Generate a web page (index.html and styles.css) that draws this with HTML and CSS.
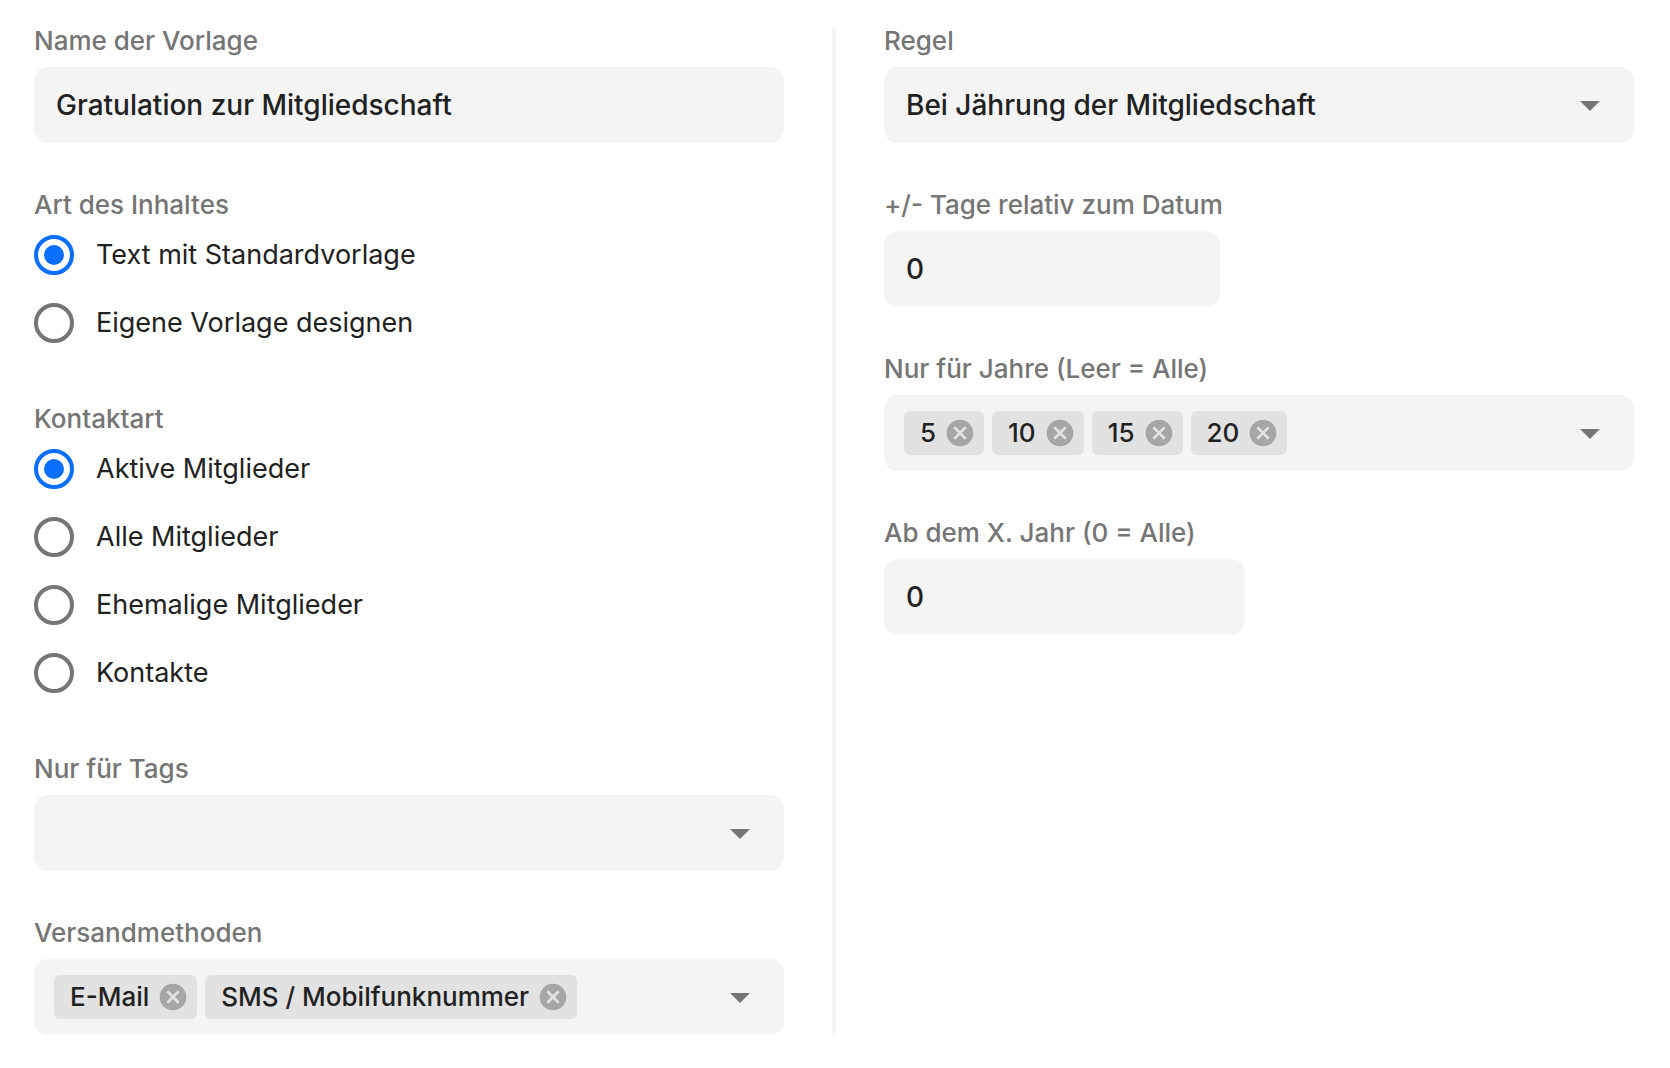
FILE: index.html
```html
<!DOCTYPE html>
<html lang="de">
<head>
  <meta charset="utf-8">
  <meta name="viewport" content="width=device-width, initial-scale=1">
  <title>Vorlage bearbeiten</title>
  <link rel="stylesheet" href="styles.css">
</head>
<body>
  <svg class="icon-defs" aria-hidden="true">
    <symbol id="icon-caret" viewBox="0 0 24 24"><path d="M2 8h20L12 18z"/></symbol>
    <symbol id="icon-cancel" viewBox="0 0 24 24"><path d="M12 2C6.47 2 2 6.47 2 12s4.47 10 10 10 10-4.47 10-10S17.53 2 12 2zm5 13.59L15.59 17 12 13.41 8.41 17 7 15.59 10.59 12 7 8.41 8.41 7 12 10.59 15.59 7 17 8.41 13.41 12 17 15.59z"/></symbol>
  </svg>

  <form class="template-form">
    <div class="column">
      <div class="group">
        <label class="label" for="name">Name der Vorlage</label>
        <input class="field text-input" id="name" type="text" value="Gratulation zur Mitgliedschaft">
      </div>

      <fieldset class="group">
        <legend class="label">Art des Inhaltes</legend>
        <div class="radios">
          <label class="radio"><input type="radio" name="content" checked>Text mit Standardvorlage</label>
          <label class="radio"><input type="radio" name="content">Eigene Vorlage designen</label>
        </div>
      </fieldset>

      <fieldset class="group">
        <legend class="label">Kontaktart</legend>
        <div class="radios">
          <label class="radio"><input type="radio" name="contact" checked>Aktive Mitglieder</label>
          <label class="radio"><input type="radio" name="contact">Alle Mitglieder</label>
          <label class="radio"><input type="radio" name="contact">Ehemalige Mitglieder</label>
          <label class="radio"><input type="radio" name="contact">Kontakte</label>
        </div>
      </fieldset>

      <div class="group">
        <label class="label" for="tags">Nur für Tags</label>
        <div class="field">
          <div class="dropdown">
            <select id="tags"><option></option></select>
            <svg class="caret" aria-hidden="true"><use href="#icon-caret"/></svg>
          </div>
        </div>
      </div>

      <div class="group">
        <label class="label" for="methods">Versandmethoden</label>
        <div class="field">
          <ul class="chips">
            <li class="chip">E-Mail<button type="button" aria-label="E-Mail entfernen"><svg><use href="#icon-cancel"/></svg></button></li>
            <li class="chip">SMS / Mobilfunknummer<button type="button" aria-label="SMS / Mobilfunknummer entfernen"><svg><use href="#icon-cancel"/></svg></button></li>
          </ul>
          <div class="dropdown">
            <select id="methods"><option></option></select>
            <svg class="caret" aria-hidden="true"><use href="#icon-caret"/></svg>
          </div>
        </div>
      </div>
    </div>

    <div class="divider"></div>

    <div class="column">
      <div class="group">
        <label class="label" for="rule">Regel</label>
        <div class="field">
          <div class="dropdown">
            <select id="rule"><option>Bei Jährung der Mitgliedschaft</option></select>
            <svg class="caret" aria-hidden="true"><use href="#icon-caret"/></svg>
          </div>
        </div>
      </div>

      <div class="group">
        <label class="label" for="days">+/- Tage relativ zum Datum</label>
        <input class="field text-input days" id="days" type="number" value="0">
      </div>

      <div class="group">
        <label class="label" for="years">Nur für Jahre (Leer = Alle)</label>
        <div class="field">
          <ul class="chips">
            <li class="chip">5<button type="button" aria-label="5 entfernen"><svg><use href="#icon-cancel"/></svg></button></li>
            <li class="chip">10<button type="button" aria-label="10 entfernen"><svg><use href="#icon-cancel"/></svg></button></li>
            <li class="chip">15<button type="button" aria-label="15 entfernen"><svg><use href="#icon-cancel"/></svg></button></li>
            <li class="chip">20<button type="button" aria-label="20 entfernen"><svg><use href="#icon-cancel"/></svg></button></li>
          </ul>
          <div class="dropdown">
            <select id="years"><option></option></select>
            <svg class="caret" aria-hidden="true"><use href="#icon-caret"/></svg>
          </div>
        </div>
      </div>

      <div class="group">
        <label class="label" for="from-year">Ab dem X. Jahr (0 = Alle)</label>
        <input class="field text-input from-year" id="from-year" type="number" value="0">
      </div>
    </div>
  </form>
</body>
</html>
```
FILE: styles.css
```css
:root {
  --text: #212121;
  --muted: #757575;
  --surface: #f4f4f4;
  --chip: #e2e2e2;
  --accent: #0a6fff;
}

* {
  box-sizing: border-box;
}

body {
  margin: 0;
  background: #fff;
  color: var(--text);
  font-family: Inter, "Liberation Sans", sans-serif;
  font-size: 28px;
  line-height: 40px;
}

.icon-defs {
  display: none;
}

.template-form {
  display: grid;
  grid-template-columns: 1fr 4px 1fr;
  column-gap: 48px;
  padding: 27px 36px 33px 34px;
}

.divider {
  background: var(--surface);
}

.column {
  display: flex;
  flex-direction: column;
  gap: 48px;
  min-width: 0;
}

.group {
  display: flex;
  flex-direction: column;
  min-width: 0;
  margin: 0;
  padding: 0;
  border: 0;
}

.label {
  padding: 0 0 12px;
  color: var(--muted);
  font-size: 26px;
  font-weight: 500;
  line-height: 28px;
}

.field {
  display: flex;
  width: 100%;
  min-height: 76px;
  border: 0;
  border-radius: 14px;
  background: var(--surface);
  color: var(--text);
  font-weight: 500;
}

.text-input {
  padding: 0 22px;
  font-family: inherit;
  font-size: 28px;
  appearance: textfield;
}

.text-input::-webkit-inner-spin-button {
  display: none;
}

.days {
  max-width: 336px;
}

.from-year {
  max-width: 361px;
}

.dropdown {
  display: grid;
  flex: 1;
  min-width: 76px;
}

.dropdown select,
.caret {
  grid-area: 1 / 1;
}

.dropdown select {
  width: 100%;
  padding: 0 76px 0 22px;
  border: 0;
  border-radius: 14px;
  appearance: none;
  background: none;
  color: inherit;
  font: inherit;
}

.caret {
  align-self: center;
  justify-self: end;
  width: 24px;
  height: 24px;
  margin-right: 32px;
  fill: var(--muted);
  pointer-events: none;
}

.chips {
  display: flex;
  flex-wrap: wrap;
  gap: 8px;
  margin: 0;
  padding: 16px 0 16px 20px;
  list-style: none;
}

.chip {
  display: flex;
  align-items: center;
  gap: 8px;
  height: 44px;
  padding: 0 8px 0 16px;
  border-radius: 6px;
  background: var(--chip);
  font-size: 26px;
}

.chip button {
  display: flex;
  padding: 0;
  border: 0;
  background: none;
}

.chip svg {
  width: 32px;
  height: 32px;
  fill: #a6a6a6;
}

.radios {
  display: flex;
  flex-direction: column;
  gap: 28px;
  padding: 4px 0 14px;
}

.radio {
  display: flex;
  align-items: center;
  gap: 22px;
  font-size: 27px;
}

.radio input {
  display: grid;
  place-items: center;
  flex: none;
  width: 40px;
  height: 40px;
  margin: 0;
  border: 4px solid var(--muted);
  border-radius: 50%;
  appearance: none;
}

.radio input:checked {
  border-color: var(--accent);
}

.radio input:checked::before {
  content: "";
  width: 20px;
  height: 20px;
  border-radius: 50%;
  background: var(--accent);
}
```
